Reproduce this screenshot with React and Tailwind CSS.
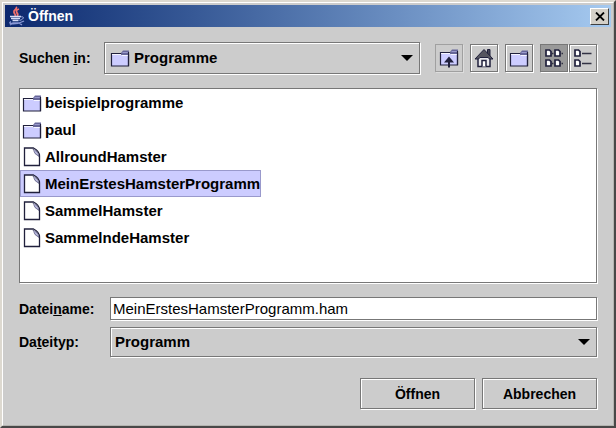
import React from "react";

const bevel = "border border-[#777777] shadow-[inset_1px_1px_0_#fff,1px_1px_0_#fff]";
const well = "border border-[#777777] shadow-[1px_1px_0_#fff]";

function FolderShape() {
  return (
    <>
      <path d="M1.500 4.500h9.500l1 1h6.500v11.500h-17z" fill="#ccccff" stroke="#20203c" strokeWidth="1.200" />
      <path d="M2 5.500h9l1 1h6" fill="none" stroke="#f4f4ff" />
      <path d="M11 4l2-2.500h6v4.500h-7z" fill="#666699" />
      <path d="M12.500 3.500h5.500" stroke="#9999cc" />
      <path d="M18.500 3v14" stroke="#20203c" strokeWidth="1.200" />
    </>
  );
}

function FolderIcon() {
  return (
    <svg className="shrink-0" width="20" height="18" viewBox="0 0 20 18" aria-hidden="true">
      <FolderShape />
    </svg>
  );
}

function FileIcon() {
  return (
    <svg className="shrink-0" width="20" height="20" viewBox="0 0 20 20" aria-hidden="true">
      <path d="M2.500 1h9q6 3 6 8v9.500h-15z" fill="#fff" stroke="#20203c" strokeWidth="1.300" />
      <path d="M11 2l2 4.500 4 3q-.500-5-6-7.500z" fill="#9999cc" stroke="#444466" strokeWidth=".6" />
      <path d="M12 3.500l4.500 4.500" stroke="#fff" strokeDasharray="1 1" />
    </svg>
  );
}

function UpIcon() {
  return (
    <svg width="20" height="20" viewBox="0 0 20 20" aria-hidden="true">
      <FolderShape />
      <path d="M10 19.500V10" stroke="#20203c" strokeWidth="2" />
      <path d="M10 8.500l5 6H5z" fill="#20203c" />
    </svg>
  );
}

function HomeIcon() {
  return (
    <svg width="20" height="20" viewBox="0 0 20 20" aria-hidden="true">
      <path d="M4 10v8.500h12V10L10 4.500z" fill="#e8e8ec" stroke="#20203c" strokeWidth="1.500" />
      <path d="M13.500 1.500h2.500v7h-2.500z" fill="#444450" stroke="#20203c" />
      <path d="M1 11L10 1.500 19 11h-3.500L14 9.500H6L4.500 11z" fill="#55555f" stroke="#20203c" />
      <path d="M8 18.500v-6h4v6" fill="#fff" stroke="#20203c" strokeWidth="1.500" />
    </svg>
  );
}

function Tile({ x, y }) {
  return <path d={`M${x} ${y}h3.500l1.500 1.500v4.500h-5z`} fill="#fff" stroke="#20203c" strokeWidth="1.700" />;
}

function GridIcon() {
  return (
    <svg width="22" height="20" viewBox="0 0 22 20" aria-hidden="true">
      <Tile x={3} y={2} />
      <Tile x={12} y={2} />
      <Tile x={3} y={12} />
      <Tile x={12} y={12} />
      <path d="M9 5.500h1.500M18.500 5.500h1.500M9 15.500h1.500M18.500 15.500h1.500" stroke="#333344" strokeWidth="1.300" />
    </svg>
  );
}

function DetailsIcon() {
  return (
    <svg width="22" height="20" viewBox="0 0 22 20" aria-hidden="true">
      <Tile x={3} y={2} />
      <Tile x={3} y={12} />
      <path d="M10 5.500h9.500M10 15.500h9.500" stroke="#333344" strokeWidth="1.300" />
    </svg>
  );
}

function JavaIcon() {
  return (
    <svg className="shrink-0" width="20" height="20" viewBox="0 0 20 20" fill="none" aria-hidden="true">
      <path d="M8 1c2 2-3 3-2 5 0 2 2 2 1 4M11 3c-3 1-3 2-2 4 1 1 1 2 0 3" stroke="#f0706c" strokeWidth="1.800" />
      <path d="M2 10.500h11M3 12.500h9M4.500 14.500h6" stroke="#d5dcf6" strokeWidth="1.500" />
      <path d="M12.500 11c4-1 4 2-1 3.500" stroke="#a5b1e2" />
      <path d="M3 15.500c-5 3 7 3 13-.5M2 19l3-2h6l3 2" stroke="#8998d5" strokeWidth="1.400" />
    </svg>
  );
}

function Caret() {
  return (
    <svg className="pointer-events-none absolute right-[7px] top-1/2 -translate-y-1/2" width="12" height="6" viewBox="0 0 12 6" aria-hidden="true">
      <path d="M0 0h12L6 6z" fill="#000" />
    </svg>
  );
}

function ToolButton({ label, children, active = false, dim = false }) {
  const look = active
    ? "border border-[#777777] bg-[#999999] shadow-[1px_1px_0_#fff]"
    : dim
      ? "border border-[#a0a0a0] shadow-[1px_1px_0_#dddddd]"
      : bevel;
  return (
    <button type="button" aria-label={label} className={`flex h-[28px] w-[28px] items-center justify-center ${look}`}>
      {children}
    </button>
  );
}

const entries = [
  { name: "beispielprogramme", folder: true },
  { name: "paul", folder: true },
  { name: "AllroundHamster" },
  { name: "MeinErstesHamsterProgramm", selected: true },
  { name: "SammelHamster" },
  { name: "SammelndeHamster" },
];

export default function App() {
  return (
    <div className="flex min-h-screen flex-col border-2 border-t-[#ddd9d0] border-l-[#ddd9d0] border-r-[#484848] border-b-[#484848] bg-[#cccccc] font-['Liberation_Sans',Arial,sans-serif] text-sm font-bold text-black">
      <div className="flex flex-1 flex-col border border-t-white border-l-white border-r-[#b4b4b0] border-b-[#b4b4b0] p-[2px]">
        <header className="flex h-[22px] items-center bg-linear-to-r from-[#0c286e] to-[#a6caf0] pr-[2px] pl-[3px]">
          <JavaIcon />
          <h1 className="flex-1 text-sm leading-5 text-white">Öffnen</h1>
          <button type="button" aria-label="Schließen" className="flex h-[17px] w-[19px] items-center justify-center border border-t-white border-l-white border-r-[#404040] border-b-[#404040] bg-[#d4d0c8]">
            <svg width="10" height="9" viewBox="0 0 10 9" aria-hidden="true">
              <path d="M1 .5l8 8M9 .5l-8 8" stroke="#000" strokeWidth="1.800" />
            </svg>
          </button>
        </header>

        <main className="flex flex-1 flex-col px-[14px] pt-[15px] pb-[14px]">
          <div className="flex items-center">
            <label htmlFor="dir" className="w-[85px]">Suchen <u>i</u>n:</label>
            <div className="relative flex-1">
              <span className="pointer-events-none absolute top-[7px] left-[6px]"><FolderIcon /></span>
              <select id="dir" className={`block h-[32px] w-full appearance-none bg-[#cccccc] pl-[29px] text-[15px] font-bold ${bevel}`}>
                <option>Programme</option>
              </select>
              <Caret />
            </div>
            <div className="ml-[15px] flex gap-[7px]">
              <ToolButton label="Eine Ebene höher" dim><UpIcon /></ToolButton>
              <ToolButton label="Home"><HomeIcon /></ToolButton>
              <ToolButton label="Neuer Ordner"><FolderIcon /></ToolButton>
              <div className="flex gap-px">
                <ToolButton label="Liste" active><GridIcon /></ToolButton>
                <ToolButton label="Details"><DetailsIcon /></ToolButton>
              </div>
            </div>
          </div>

          <ul className={`mt-[14px] flex-1 bg-white ${well}`}>
            {entries.map((e) => (
              <li key={e.name} className="flex">
                <button
                  type="button"
                  aria-pressed={!!e.selected}
                  className={`flex h-[27px] items-center gap-[3px] border pl-px text-[15px] font-bold ${e.selected ? "border-[#9999cc] bg-[#ccccff]" : "border-transparent"}`}
                >
                  {e.folder ? <FolderIcon /> : <FileIcon />}
                  {e.name}
                </button>
              </li>
            ))}
          </ul>

          <div className="mt-[14px] flex items-center">
            <label htmlFor="file" className="w-[91px]">Datei<u>n</u>ame:</label>
            <input id="file" type="text" defaultValue="MeinErstesHamsterProgramm.ham" className={`h-[23px] min-w-0 flex-1 bg-white px-[2px] text-[15px] font-normal ${well}`} />
          </div>
          <div className="mt-[7px] flex items-center">
            <label htmlFor="type" className="w-[91px]">Da<u>t</u>eityp:</label>
            <div className="relative flex-1">
              <select id="type" className={`block h-[30px] w-full appearance-none bg-[#cccccc] pl-[4px] text-[15px] font-bold ${bevel}`}>
                <option>Programm</option>
              </select>
              <Caret />
            </div>
          </div>
          <div className="mt-[21px] flex justify-end gap-[7px]">
            <button type="button" className={`h-[31px] w-[115px] ${bevel}`}>Öffnen</button>
            <button type="button" className={`h-[31px] w-[115px] ${bevel}`}>Abbrechen</button>
          </div>
        </main>
      </div>
    </div>
  );
}
